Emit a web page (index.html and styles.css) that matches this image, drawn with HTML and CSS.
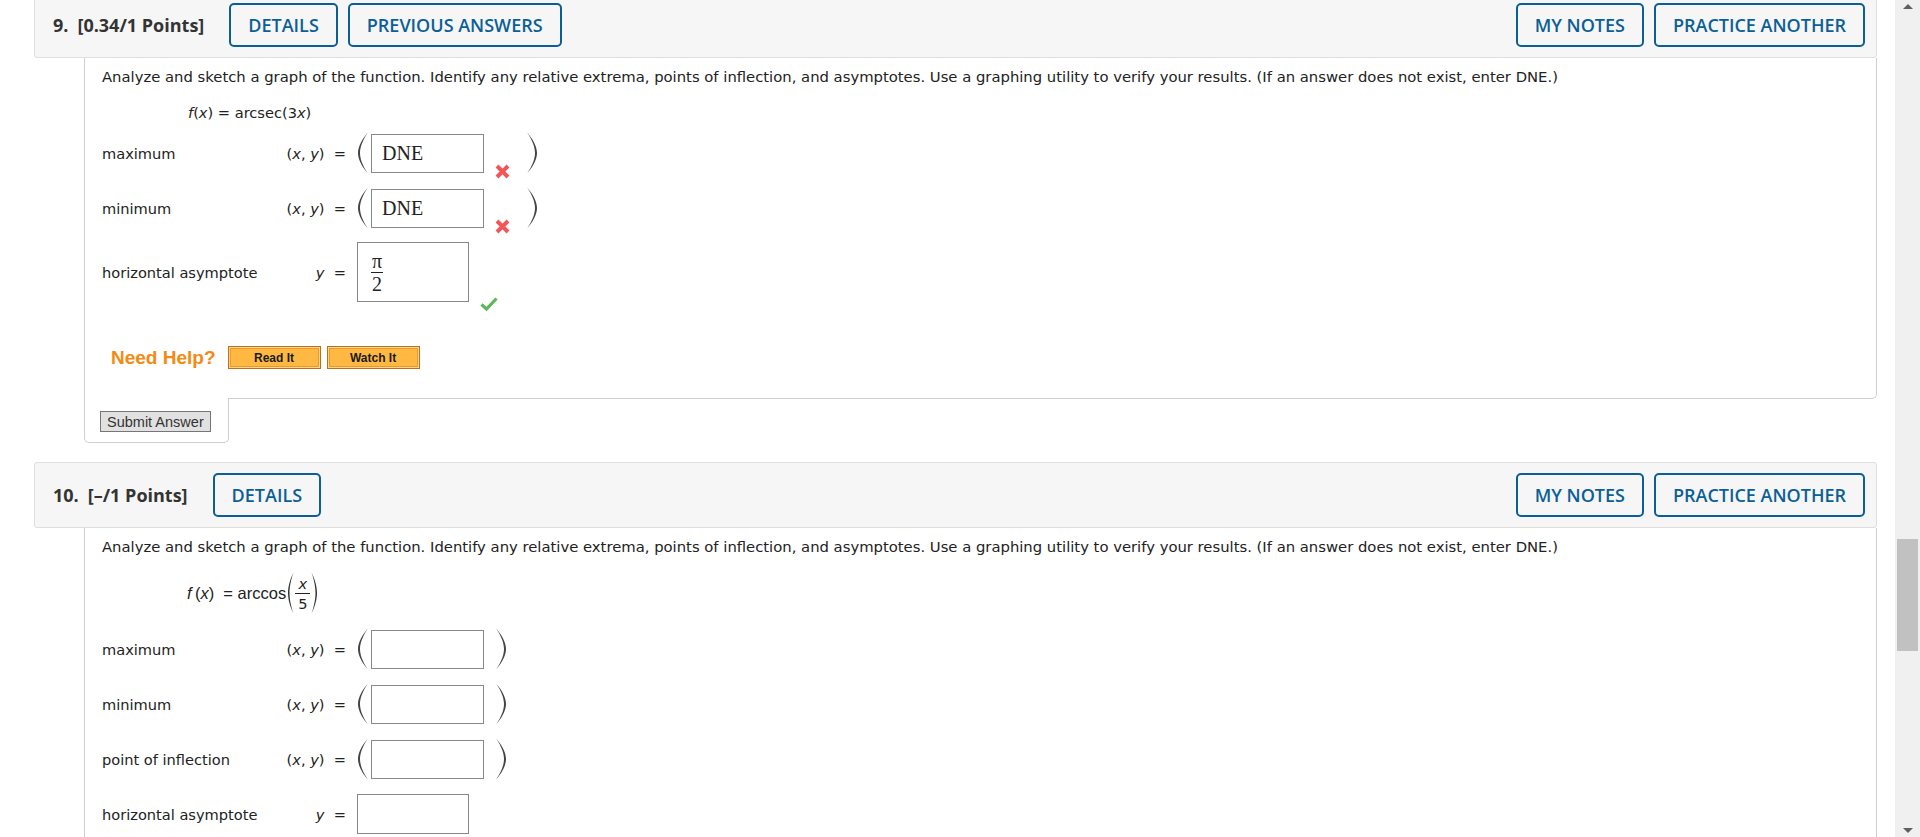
FILE: index.html
```html
<!DOCTYPE html>
<html lang="en">
<head>
    <meta charset="UTF-8">
    <title>Assignment</title>
    <link rel="stylesheet" href="styles.css">
</head>
<body>

    <div class="page">

        <!-- Domanda 9 -->
        <div class="question first">
            <div class="q-header">
                <span class="q-title"><span class="q-num">9.</span>[0.34/1 Points]</span>
                <button class="btn-outline">DETAILS</button>
                <button class="btn-outline">PREVIOUS ANSWERS</button>
                <span class="spacer"></span>
                <button class="btn-outline">MY NOTES</button>
                <button class="btn-outline">PRACTICE ANOTHER</button>
            </div>
            <div class="q-body">
                <p class="q-text">Analyze and sketch a graph of the function. Identify any relative extrema, points of inflection, and asymptotes. Use a graphing utility to verify your results. (If an answer does not exist, enter DNE.)</p>
                <div class="formula"><i>f</i>(<i>x</i>) = arcsec(3<i>x</i>)</div>

                <div class="answer-row">
                    <span class="answer-label">maximum</span>
                    <span class="answer-math">(<i>x</i>, <i>y</i>) &nbsp;=</span>
                    <svg class="paren" width="13" height="42" viewBox="0 0 13 42"><path d="M12 0.5 C4 9 2 17 2 21 C2 25 4 33 12 41.5 C6 33 4 26 4 21 C4 16 6 9 12 0.5 Z"/></svg>
                    <span class="answer-box">DNE</span>
                    <svg class="mark-wrong" width="15" height="15" viewBox="0 0 15 15"><path d="M2 2 L13 13 M13 2 L2 13"/></svg>
                    <svg class="paren paren-right" width="13" height="42" viewBox="0 0 13 42"><path d="M1 0.5 C9 9 11 17 11 21 C11 25 9 33 1 41.5 C7 33 9 26 9 21 C9 16 7 9 1 0.5 Z"/></svg>
                </div>

                <div class="answer-row">
                    <span class="answer-label">minimum</span>
                    <span class="answer-math">(<i>x</i>, <i>y</i>) &nbsp;=</span>
                    <svg class="paren" width="13" height="42" viewBox="0 0 13 42"><path d="M12 0.5 C4 9 2 17 2 21 C2 25 4 33 12 41.5 C6 33 4 26 4 21 C4 16 6 9 12 0.5 Z"/></svg>
                    <span class="answer-box">DNE</span>
                    <svg class="mark-wrong" width="15" height="15" viewBox="0 0 15 15"><path d="M2 2 L13 13 M13 2 L2 13"/></svg>
                    <svg class="paren paren-right" width="13" height="42" viewBox="0 0 13 42"><path d="M1 0.5 C9 9 11 17 11 21 C11 25 9 33 1 41.5 C7 33 9 26 9 21 C9 16 7 9 1 0.5 Z"/></svg>
                </div>

                <div class="answer-row">
                    <span class="answer-label">horizontal asymptote</span>
                    <span class="answer-math"><i>y</i> &nbsp;=</span>
                    <span class="answer-box box-tall">
                        <span class="frac"><span>&pi;</span><span class="frac-den">2</span></span>
                    </span>
                    <svg class="mark-right" width="18" height="14" viewBox="0 0 18 14"><path d="M1.5 7.5 L6.5 12 L16.5 1.5"/></svg>
                </div>

                <div class="help-row">
                    <span class="need-help">Need Help?</span>
                    <button class="btn-help">Read It</button>
                    <button class="btn-help">Watch It</button>
                </div>
            </div>
            <div class="submit-tab">
                <button class="btn-submit">Submit Answer</button>
            </div>
        </div>

        <!-- Domanda 10 -->
        <div class="question">
            <div class="q-header">
                <span class="q-title"><span class="q-num">10.</span>[&ndash;/1 Points]</span>
                <button class="btn-outline">DETAILS</button>
                <span class="spacer"></span>
                <button class="btn-outline">MY NOTES</button>
                <button class="btn-outline">PRACTICE ANOTHER</button>
            </div>
            <div class="q-body">
                <p class="q-text">Analyze and sketch a graph of the function. Identify any relative extrema, points of inflection, and asymptotes. Use a graphing utility to verify your results. (If an answer does not exist, enter DNE.)</p>
                <div class="formula formula-frac">
                    <span><i>f</i>&thinsp;(<i>x</i>) &nbsp;= arccos</span>
                    <svg class="paren paren-small" width="7" height="42" viewBox="0 0 7 42"><path d="M6.5 0.5 C2 9 1 17 1 21 C1 25 2 33 6.5 41.5 C3.5 33 2.5 26 2.5 21 C2.5 16 3.5 9 6.5 0.5 Z"/></svg>
                    <span class="frac frac-sans"><i>x</i><span class="frac-den">5</span></span>
                    <svg class="paren paren-small" width="7" height="42" viewBox="0 0 7 42"><path d="M0.5 0.5 C5 9 6 17 6 21 C6 25 5 33 0.5 41.5 C3.5 33 4.5 26 4.5 21 C4.5 16 3.5 9 0.5 0.5 Z"/></svg>
                </div>

                <div class="answer-row">
                    <span class="answer-label">maximum</span>
                    <span class="answer-math">(<i>x</i>, <i>y</i>) &nbsp;=</span>
                    <svg class="paren" width="13" height="42" viewBox="0 0 13 42"><path d="M12 0.5 C4 9 2 17 2 21 C2 25 4 33 12 41.5 C6 33 4 26 4 21 C4 16 6 9 12 0.5 Z"/></svg>
                    <span class="answer-box"></span>
                    <svg class="paren paren-close" width="13" height="42" viewBox="0 0 13 42"><path d="M1 0.5 C9 9 11 17 11 21 C11 25 9 33 1 41.5 C7 33 9 26 9 21 C9 16 7 9 1 0.5 Z"/></svg>
                </div>

                <div class="answer-row">
                    <span class="answer-label">minimum</span>
                    <span class="answer-math">(<i>x</i>, <i>y</i>) &nbsp;=</span>
                    <svg class="paren" width="13" height="42" viewBox="0 0 13 42"><path d="M12 0.5 C4 9 2 17 2 21 C2 25 4 33 12 41.5 C6 33 4 26 4 21 C4 16 6 9 12 0.5 Z"/></svg>
                    <span class="answer-box"></span>
                    <svg class="paren paren-close" width="13" height="42" viewBox="0 0 13 42"><path d="M1 0.5 C9 9 11 17 11 21 C11 25 9 33 1 41.5 C7 33 9 26 9 21 C9 16 7 9 1 0.5 Z"/></svg>
                </div>

                <div class="answer-row">
                    <span class="answer-label">point of inflection</span>
                    <span class="answer-math">(<i>x</i>, <i>y</i>) &nbsp;=</span>
                    <svg class="paren" width="13" height="42" viewBox="0 0 13 42"><path d="M12 0.5 C4 9 2 17 2 21 C2 25 4 33 12 41.5 C6 33 4 26 4 21 C4 16 6 9 12 0.5 Z"/></svg>
                    <span class="answer-box"></span>
                    <svg class="paren paren-close" width="13" height="42" viewBox="0 0 13 42"><path d="M1 0.5 C9 9 11 17 11 21 C11 25 9 33 1 41.5 C7 33 9 26 9 21 C9 16 7 9 1 0.5 Z"/></svg>
                </div>

                <div class="answer-row">
                    <span class="answer-label">horizontal asymptote</span>
                    <span class="answer-math"><i>y</i> &nbsp;=</span>
                    <span class="answer-box box-plain"></span>
                </div>
            </div>
        </div>

    </div>

    <div class="scrollbar">
        <span class="arrow-up"></span>
        <span class="thumb"></span>
        <span class="arrow-down"></span>
    </div>

</body>
</html>
```

FILE: styles.css
```css
/* Stili di base */
body {
    margin: 0;
    height: 837px;
    overflow: hidden;
    display: flex;
    background-color: #fff;
    color: #222;
    font-family: "DejaVu Sans", Verdana, sans-serif;
}

.page {
    flex: 1;
    padding: 0 18px 0 34px;
    margin-top: -8px;
}

/* Intestazione della domanda */
.question + .question {
    margin-top: 19px;
}

.q-header {
    display: flex;
    align-items: center;
    background-color: #f6f6f6;
    border: 1px solid #dedede;
    border-radius: 3px;
    padding: 10px 11px 10px 18px;
    font-family: "Open Sans", sans-serif;
}

.q-title {
    font-size: 18px;
    font-weight: 700;
    color: #333;
    margin-right: 25px;
}

.q-num {
    margin-right: 9px;
}

.spacer {
    flex: 1;
}

.btn-outline {
    height: 44px;
    padding: 0 17px;
    margin-right: 10px;
    border: 2px solid #0b5f96;
    border-radius: 5px;
    background-color: #f6f6f6;
    color: #0b5f96;
    font-family: "Open Sans", sans-serif;
    font-size: 18px;
    font-weight: 600;
    cursor: pointer;
}

.btn-outline:last-child {
    margin-right: 0;
}

/* Corpo della domanda */
.q-body {
    margin-left: 50px;
    padding: 10px 17px 29px 17px;
    border: 1px solid #cfcfcf;
    border-top: none;
    border-radius: 0 0 5px 0;
}

.q-text {
    margin: 0;
    font-size: 14.8px;
    line-height: 17px;
}

.formula {
    margin: 19px 0 10px 86px;
    font-size: 14.6px;
    line-height: 18px;
}

.formula-frac {
    display: flex;
    align-items: center;
    margin: 17px 0 14px 85px;
    height: 42px;
    font-family: "Liberation Sans", Arial, sans-serif;
    font-size: 16.5px;
}

.formula-frac > span:first-child {
    margin-right: 1px;
}

.answer-row {
    display: flex;
    align-items: center;
    min-height: 42px;
    margin-bottom: 13px;
}

.answer-label {
    width: 184px;
    font-size: 14.6px;
}

.answer-math {
    width: 60px;
    margin-right: 10px;
    text-align: right;
    font-size: 14.6px;
    white-space: nowrap;
}

.paren {
    fill: #444;
    flex-shrink: 0;
}

.paren-right {
    margin-left: 16px;
}

.paren-close {
    margin-left: 11px;
}

.paren-small {
    fill: #333;
}

.answer-box {
    display: flex;
    align-items: center;
    box-sizing: border-box;
    width: 113px;
    height: 39px;
    margin-left: 2px;
    padding-left: 10px;
    border: 1px solid #888;
    background-color: #fff;
    font-family: "Liberation Serif", "Times New Roman", serif;
    font-size: 20px;
}

.box-tall {
    width: 112px;
    height: 60px;
    margin-left: 1px;
    padding-left: 13px;
}

.box-plain {
    width: 112px;
    height: 40px;
    margin-left: 1px;
}

.frac {
    display: inline-flex;
    flex-direction: column;
    align-items: center;
    font-size: 20px;
    line-height: 22px;
}

.frac-den {
    border-top: 1px solid #222;
    padding: 0 1px;
}

.frac-sans {
    margin: 0 1px;
    font-family: "DejaVu Sans", Verdana, sans-serif;
    font-size: 14.6px;
    line-height: 19px;
}

.frac-sans .frac-den {
    padding: 0 3px;
}

.mark-wrong {
    align-self: flex-end;
    margin: 0 0 -5px 11px;
    stroke: #f25757;
    stroke-width: 4;
}

.mark-right {
    align-self: flex-end;
    margin: 0 0 -9px 11px;
    fill: none;
    stroke: #5cb85c;
    stroke-width: 3.2;
}

/* Riga di aiuto */
.help-row {
    display: flex;
    align-items: center;
    margin: 44px 0 0 9px;
    height: 23px;
}

.need-help {
    font-family: "Liberation Sans", Arial, sans-serif;
    font-size: 19px;
    font-weight: bold;
    color: #f38a12;
    margin-right: 12px;
}

.btn-help {
    width: 93px;
    height: 23px;
    margin-right: 6px;
    padding: 0;
    border: 1px solid #b8711f;
    background-color: #ffb943;
    box-shadow: inset 0 0 0 1px #fcd58a, inset 0 0 0 2px #ea9a2c;
    color: #1a1a1a;
    font-family: "Liberation Sans", Arial, sans-serif;
    font-size: 12px;
    font-weight: bold;
    cursor: pointer;
}

/* Linguetta con il pulsante di invio */
.submit-tab {
    box-sizing: border-box;
    width: 145px;
    margin: -1px 0 0 50px;
    padding: 13px 0 10px 15px;
    background-color: #fff;
    border: 1px solid #cfcfcf;
    border-top: none;
    border-radius: 0 0 5px 5px;
}

.btn-submit {
    display: block;
    height: 21px;
    padding: 0 6px;
    border: 1px solid #767676;
    background-color: #e1e1e1;
    color: #333;
    font-family: "Liberation Sans", Arial, sans-serif;
    font-size: 14.5px;
    cursor: pointer;
}

/* Barra di scorrimento */
.scrollbar {
    width: 25px;
    display: flex;
    flex-direction: column;
    align-items: center;
    background-color: #f0f0f0;
}

.arrow-up,
.arrow-down {
    width: 0;
    height: 0;
    border-left: 5px solid transparent;
    border-right: 5px solid transparent;
}

.arrow-up {
    margin-top: 4px;
    border-bottom: 5px solid #606060;
}

.arrow-down {
    margin-top: auto;
    margin-bottom: 4px;
    border-top: 5px solid #606060;
}

.thumb {
    width: 21px;
    height: 112px;
    margin-top: 530px;
    background-color: #c1c1c1;
}
```
